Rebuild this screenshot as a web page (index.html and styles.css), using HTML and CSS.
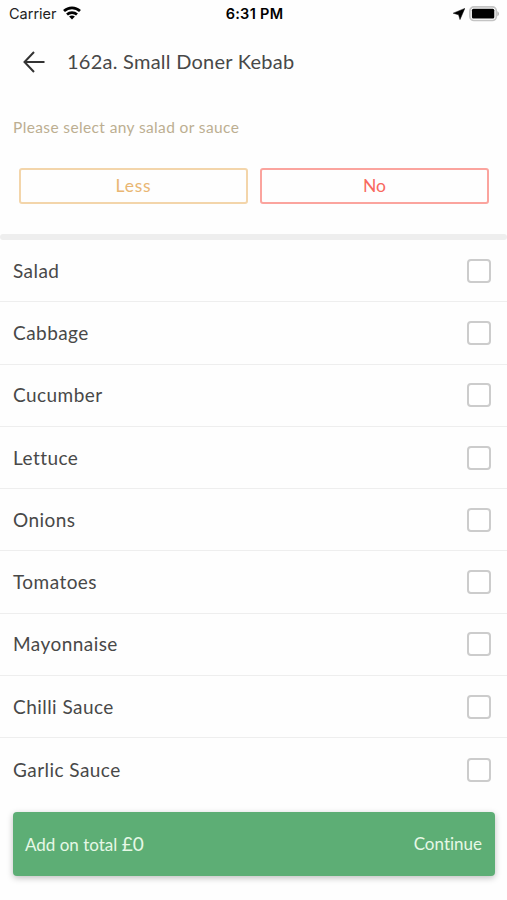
FILE: index.html
```
<!DOCTYPE html>
<html lang="en">
<head>
    <meta charset="utf-8">
    <title>162a. Small Doner Kebab</title>
    <meta name="viewport" content="width=device-width, initial-scale=1">
    <link rel="stylesheet" href="styles.css">
</head>
<body>
    <div class="status-bar">
        <div class="status-left">
            <span>Carrier</span>
            <svg width="18" height="14" viewBox="0 0 18 14" fill="none" stroke="#000" stroke-width="2.7">
                <path d="M1 5.1C5.5 0.9 12.5 0.9 17 5.1"/>
                <path d="M4 8.5C6.8 5.9 11.2 5.9 14 8.5"/>
                <path d="M9 13.4L6.1 10.6C7.8 9.2 10.2 9.2 11.9 10.6Z" fill="#000" stroke="none"/>
            </svg>
        </div>
        <span class="time">6:31 PM</span>
        <div class="status-right">
            <svg width="12" height="12" viewBox="0 0 12 12">
                <path d="M11.8 0.4L0.2 5.2L5.6 6.8L7 11.6Z" fill="#000" stroke="#000" stroke-width="0.5"/>
            </svg>
            <svg width="31" height="16" viewBox="0 0 31 16">
                <rect x="0.9" y="0.9" width="26.4" height="13.6" rx="4" fill="#fff" stroke="#c4c4c4" stroke-width="1.7"/>
                <rect x="2.9" y="2.8" width="22.4" height="9.8" rx="1.5" fill="#000"/>
                <path d="M28.3 5.2C30.6 6 30.6 9.4 28.3 10.2Z" fill="#b8b8b8"/>
            </svg>
        </div>
    </div>

    <div class="header">
        <svg width="22" height="22" viewBox="0 0 22 22" fill="none" stroke="#333" stroke-width="2">
            <path d="M21.5 11H1.5M11 1L1.5 11L11 21"/>
        </svg>
        <h1>162a. Small Doner Kebab</h1>
    </div>

    <div class="options">
        <p>Please select any salad or sauce</p>
        <div class="option-buttons">
            <button type="button" class="less">Less</button>
            <button type="button" class="no">No</button>
        </div>
    </div>

    <div class="separator"></div>

    <div class="list">
        <label class="item"><span>Salad</span><input type="checkbox"></label>
        <label class="item"><span>Cabbage</span><input type="checkbox"></label>
        <label class="item"><span>Cucumber</span><input type="checkbox"></label>
        <label class="item"><span>Lettuce</span><input type="checkbox"></label>
        <label class="item"><span>Onions</span><input type="checkbox"></label>
        <label class="item"><span>Tomatoes</span><input type="checkbox"></label>
        <label class="item"><span>Mayonnaise</span><input type="checkbox"></label>
        <label class="item"><span>Chilli Sauce</span><input type="checkbox"></label>
        <label class="item"><span>Garlic Sauce</span><input type="checkbox"></label>
    </div>

    <div class="footer">
        <span>Add on total <span class="price">£0</span></span>
        <span>Continue</span>
    </div>
</body>
</html>
```
FILE: styles.css
```
* {
    box-sizing: border-box;
}

body {
    font-family: Lato, "Open Sans", sans-serif;
    font-variant-ligatures: none;
    margin: 0;
    height: 900px;
    background-color: #fefefe;
    color: #484848;
    overflow: hidden;
}

.status-bar {
    display: grid;
    grid-template-columns: 1fr auto 1fr;
    align-items: center;
    height: 27px;
    padding: 0 7px 0 9px;
    font-family: Inter, "Liberation Sans", sans-serif;
    font-size: 14.5px;
    color: #222;
}

.status-left,
.status-right {
    display: flex;
    align-items: center;
    gap: 6px;
}

.status-left svg {
    margin-top: -2px;
}

.status-right {
    justify-content: flex-end;
    gap: 4px;
}

.time {
    font-weight: 600;
    letter-spacing: 0.3px;
    color: #000;
}

.header {
    display: flex;
    align-items: center;
    height: 70px;
    padding-left: 23px;
    gap: 22px;
}

.header h1 {
    margin: 0 0 2px;
    font-size: 20px;
    font-weight: 400;
    letter-spacing: 0.25px;
}

.options {
    height: 137px;
    padding: 20px 18px 0 19px;
}

.options p {
    margin: 0 0 31px -6px;
    font-size: 15.5px;
    line-height: 20px;
    letter-spacing: 0.38px;
    color: #bcae91;
}

.option-buttons {
    display: flex;
    gap: 12px;
}

.option-buttons button {
    flex: 1;
    height: 36px;
    padding: 0 0 2px;
    background: none;
    border: 2px solid;
    border-radius: 3px;
    font-family: inherit;
    font-size: 17.5px;
    letter-spacing: 0.8px;
}

.option-buttons .less {
    color: #e9b673;
    border-color: #f3d5aa;
}

.option-buttons .no {
    color: #f8695f;
    border-color: #fba49e;
    letter-spacing: 0;
}

.separator {
    height: 6px;
    background-color: #eee;
    border-radius: 4px;
}

.item {
    display: flex;
    align-items: center;
    justify-content: space-between;
    height: 62.3px;
    padding: 0 16px 0 13px;
    border-bottom: 1px solid #eee;
    font-size: 19px;
    letter-spacing: 0.45px;
}

.item:last-child {
    border-bottom: none;
}

.item span {
    margin-bottom: 1px;
}

.item input {
    appearance: none;
    width: 24px;
    height: 24px;
    margin: 0;
    background-color: #fff;
    border: 2px solid #ccc;
    border-radius: 4px;
}

.footer {
    display: flex;
    align-items: center;
    justify-content: space-between;
    height: 64px;
    margin: 11px 12px 0 13px;
    padding: 0 13px 0 12px;
    background-color: #5dae75;
    border-radius: 4px;
    box-shadow: 0 2px 6px rgba(0, 0, 0, 0.25);
    font-size: 17px;
    color: #e6f8e6;
}

.price {
    font-size: 19px;
}
```
